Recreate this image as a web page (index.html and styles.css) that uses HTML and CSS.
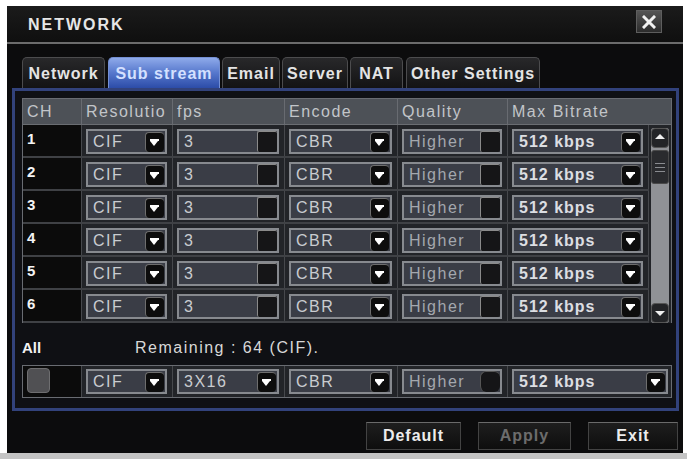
FILE: index.html
```html
<!DOCTYPE html>
<html>
<head>
<meta charset="utf-8">
<link rel="stylesheet" href="styles.css">
</head>
<body>
<div class="page">
  <div class="window">
    <div class="titlebar">
      <span class="title">NETWORK</span>
      <span class="close"><svg width="14" height="14" viewBox="0 0 14 14"><path d="M2 2L12 12M12 2L2 12" stroke="#f2f2f2" stroke-width="3" stroke-linecap="square"/></svg></span>
    </div>
    <div class="main">
      <div class="tabs">
        <div class="tab t-network">Network</div>
        <div class="tab t-sub active">Sub stream</div>
        <div class="tab t-email">Email</div>
        <div class="tab t-server">Server</div>
        <div class="tab t-nat">NAT</div>
        <div class="tab t-other">Other Settings</div>
      </div>
      <div class="panel">
        <div class="table">
          <div class="thead">
            <div class="th">CH</div>
            <div class="th">Resolutio</div>
            <div class="th">fps</div>
            <div class="th">Encode</div>
            <div class="th">Quality</div>
            <div class="th">Max Bitrate</div>
          </div>
          <div class="tbody">
            <div class="rows">
              <div class="row">
                <div class="cell ch">1</div>
                <div class="cell"><div class="box"><span>CIF</span><span class="arr"></span></div></div>
                <div class="cell"><div class="box"><span>3</span><span class="dis"></span></div></div>
                <div class="cell"><div class="box"><span>CBR</span><span class="arr"></span></div></div>
                <div class="cell"><div class="box muted"><span>Higher</span><span class="dis"></span></div></div>
                <div class="cell"><div class="box strong"><span>512 kbps</span><span class="arr"></span></div></div>
              </div>
              <div class="row">
                <div class="cell ch">2</div>
                <div class="cell"><div class="box"><span>CIF</span><span class="arr"></span></div></div>
                <div class="cell"><div class="box"><span>3</span><span class="dis"></span></div></div>
                <div class="cell"><div class="box"><span>CBR</span><span class="arr"></span></div></div>
                <div class="cell"><div class="box muted"><span>Higher</span><span class="dis"></span></div></div>
                <div class="cell"><div class="box strong"><span>512 kbps</span><span class="arr"></span></div></div>
              </div>
              <div class="row">
                <div class="cell ch">3</div>
                <div class="cell"><div class="box"><span>CIF</span><span class="arr"></span></div></div>
                <div class="cell"><div class="box"><span>3</span><span class="dis"></span></div></div>
                <div class="cell"><div class="box"><span>CBR</span><span class="arr"></span></div></div>
                <div class="cell"><div class="box muted"><span>Higher</span><span class="dis"></span></div></div>
                <div class="cell"><div class="box strong"><span>512 kbps</span><span class="arr"></span></div></div>
              </div>
              <div class="row">
                <div class="cell ch">4</div>
                <div class="cell"><div class="box"><span>CIF</span><span class="arr"></span></div></div>
                <div class="cell"><div class="box"><span>3</span><span class="dis"></span></div></div>
                <div class="cell"><div class="box"><span>CBR</span><span class="arr"></span></div></div>
                <div class="cell"><div class="box muted"><span>Higher</span><span class="dis"></span></div></div>
                <div class="cell"><div class="box strong"><span>512 kbps</span><span class="arr"></span></div></div>
              </div>
              <div class="row">
                <div class="cell ch">5</div>
                <div class="cell"><div class="box"><span>CIF</span><span class="arr"></span></div></div>
                <div class="cell"><div class="box"><span>3</span><span class="dis"></span></div></div>
                <div class="cell"><div class="box"><span>CBR</span><span class="arr"></span></div></div>
                <div class="cell"><div class="box muted"><span>Higher</span><span class="dis"></span></div></div>
                <div class="cell"><div class="box strong"><span>512 kbps</span><span class="arr"></span></div></div>
              </div>
              <div class="row">
                <div class="cell ch">6</div>
                <div class="cell"><div class="box"><span>CIF</span><span class="arr"></span></div></div>
                <div class="cell"><div class="box"><span>3</span><span class="dis"></span></div></div>
                <div class="cell"><div class="box"><span>CBR</span><span class="arr"></span></div></div>
                <div class="cell"><div class="box muted"><span>Higher</span><span class="dis"></span></div></div>
                <div class="cell"><div class="box strong"><span>512 kbps</span><span class="arr"></span></div></div>
              </div>
            </div>
            <div class="scroll">
              <div class="sb">
                <div class="sb-btn up"></div>
                <div class="sb-thumb"><i></i><i></i><i></i></div>
                <div class="sb-btn down"></div>
              </div>
            </div>
          </div>
        </div>
        <div class="allrow">
          <span class="all">All</span>
          <span class="remaining">Remaining : 64 (CIF).</span>
        </div>
        <div class="allset">
          <div class="cell ch"><div class="chk"></div></div>
          <div class="cell"><div class="box"><span>CIF</span><span class="arr"></span></div></div>
          <div class="cell"><div class="box"><span>3X16</span><span class="arr"></span></div></div>
          <div class="cell"><div class="box"><span>CBR</span><span class="arr"></span></div></div>
          <div class="cell"><div class="box muted"><span>Higher</span><span class="dis round"></span></div></div>
          <div class="cell last"><div class="box strong"><span>512 kbps</span><span class="arr"></span></div></div>
        </div>
      </div>
      <div class="buttons">
        <div class="btn b-default">Default</div>
        <div class="btn b-apply">Apply</div>
        <div class="btn b-exit">Exit</div>
      </div>
    </div>
  </div>
  <div class="strip"></div>
</div>
</body>
</html>
```

FILE: styles.css
```css
* { box-sizing: border-box; }
body {
  margin: 0;
  background: #ffffff;
  font-family: "Liberation Sans", Arial, sans-serif;
}
.page {
  width: 687px;
  height: 459px;
  padding: 6px 4px 0 7px;
  overflow: hidden;
}
.window {
  width: 676px;
  height: 447px;
  background: #0c0c0d;
  display: flex;
  flex-direction: column;
}
.strip {
  height: 6px;
  margin: 0 -4px 0 -7px;
  background: #c4c4c4;
}
.titlebar {
  height: 38px;
  flex: none;
  border-bottom: 2px solid #6c6c6c;
  background: linear-gradient(#1b1b1b, #0f0f0f);
  display: flex;
  align-items: center;
  justify-content: space-between;
  padding: 2px 21px 0;
}
.title {
  color: #e6e6e6;
  font-weight: bold;
  font-size: 16px;
  letter-spacing: 2px;
}
.close {
  align-self: flex-start;
  margin-top: 2px;
  width: 26px;
  height: 23px;
  border: 1px solid #5e5e5e;
  background: linear-gradient(#555555, #2c2c2c);
  display: flex;
  align-items: center;
  justify-content: center;
}
.main {
  flex: 1;
  padding-top: 13px;
  display: flex;
  flex-direction: column;
}
.tabs {
  display: flex;
  gap: 2px;
  padding-left: 15px;
  height: 31px;
}
.tab {
  height: 31px;
  border: 1px solid #4c4c4e;
  border-bottom: none;
  border-radius: 5px 5px 0 0;
  background: linear-gradient(#28282a, #131314);
  color: #e4e4e4;
  font-weight: bold;
  font-size: 16px;
  letter-spacing: 1px;
  display: flex;
  align-items: center;
  justify-content: center;
  padding-top: 2px;
}
.tab.active {
  background: linear-gradient(#8eaaea, #5677cc 50%, #2c4ca8);
  border-color: #7590d4;
  color: #d4e0ff;
}
.t-network { width: 83px; }
.t-sub { width: 112px; margin-left: 1px; }
.t-email { width: 58px; }
.t-server { width: 66px; }
.t-nat { width: 53px; }
.t-other { width: 134px; margin-left: 1px; }

.panel {
  margin: 0 4px 0 5px;
  height: 323px;
  border: 3px solid #32427b;
  background: #0f1014;
  padding: 7px 4px 0 7px;
}
.table {
  width: 650px;
  border: 1px solid #696c72;
  border-bottom: none;
  background: #222428;
}
.thead {
  display: grid;
  grid-template-columns: 59px 91px 112px 113px 110px 163px;
  height: 26px;
  background: #4d5157;
  border-bottom: 1px solid #6a6d72;
}
.th {
  border-right: 1px solid #686b71;
  padding-left: 4px;
  color: #c2c5c9;
  font-size: 16px;
  letter-spacing: 1.5px;
  line-height: 26px;
  white-space: nowrap;
  overflow: hidden;
}
.th:last-child { border-right: none; }
.tbody { display: flex; }
.rows { width: 626px; }
.row {
  display: grid;
  grid-template-columns: 59px 91px 112px 113px 110px 141px;
  height: 33px;
  border-bottom: 2px solid #3f4145;
}
.cell {
  border-right: 1px solid #46484c;
  padding: 4px 5px 0 4px;
}
.ch {
  background: #0b0b0b;
  color: #f4f4f4;
  font-weight: bold;
  font-size: 15px;
  line-height: 18px;
  padding: 5px 0 0 4px;
}
.box {
  height: 25px;
  border: 2px solid #878a8f;
  background: #3a3d46;
  display: flex;
  align-items: center;
  justify-content: space-between;
  padding-left: 5px;
  color: #c9ccd0;
  font-size: 16px;
  letter-spacing: 1.5px;
  white-space: nowrap;
}
.box.muted { color: #a4a8ae; }
.box.strong { color: #dcdee2; font-weight: bold; letter-spacing: 1px; }
.arr {
  position: relative;
  flex: none;
  width: 19px;
  height: 20px;
  margin-right: 1px;
  background: #0d0d0d;
  border-radius: 4px;
  border-top: 1px solid #6e6e6e;
  border-left: 1px solid #6e6e6e;
}
.arr::before {
  content: "";
  position: absolute;
  left: 4px;
  top: 6px;
  width: 9px;
  height: 2px;
  background: #ffffff;
}
.arr::after {
  content: "";
  position: absolute;
  left: 4px;
  top: 8px;
  border-left: 4.5px solid transparent;
  border-right: 4.5px solid transparent;
  border-top: 5px solid #ffffff;
}
.dis {
  flex: none;
  width: 20px;
  height: 21px;
  background: #151517;
  border-top: 1px solid #8a8a8a;
  border-left: 1px solid #8a8a8a;
  border-radius: 2px;
}
.dis.round { border-radius: 6px; border-color: #555; }

.scroll {
  width: 22px;
  padding: 3px 2px 0 2px;
}
.sb {
  width: 18px;
  height: 195px;
  background: #909296;
  border-radius: 3px;
  display: flex;
  flex-direction: column;
}
.sb-btn {
  position: relative;
  height: 20px;
  background: #232427;
  border-radius: 4px;
  border: 1px solid #555;
}
.sb-btn.down { margin-top: auto; }
.sb-btn.up::after {
  content: "";
  position: absolute;
  left: 3px;
  top: 5px;
  border-left: 5px solid transparent;
  border-right: 5px solid transparent;
  border-bottom: 5px solid #f0f0f0;
}
.sb-btn.down::after {
  content: "";
  position: absolute;
  left: 3px;
  top: 7px;
  border-left: 5px solid transparent;
  border-right: 5px solid transparent;
  border-top: 5px solid #f0f0f0;
}
.sb-thumb {
  margin-top: 2px;
  height: 34px;
  background: #2a2b2e;
  border-radius: 3px;
  border: 1px solid #4a4a4a;
  display: flex;
  flex-direction: column;
  align-items: center;
  justify-content: center;
  gap: 3px;
}
.sb-thumb i {
  display: block;
  width: 10px;
  height: 1px;
  background: #8a8c90;
}

.allrow {
  height: 42px;
  display: flex;
  align-items: flex-end;
  padding-bottom: 7px;
  line-height: 20px;
}
.all {
  width: 113px;
  color: #f2f2f2;
  font-weight: bold;
  font-size: 15px;
}
.remaining {
  color: #d8d8d8;
  font-size: 16px;
  letter-spacing: 1.5px;
}
.allset {
  display: grid;
  grid-template-columns: 59px 91px 112px 113px 110px 163px;
  width: 650px;
  height: 33px;
  border: 1px solid #696c72;
  background: #222428;
}
.allset .cell { padding-top: 3px; }
.allset .cell:last-child { border-right: none; padding-right: 3px; }
.allset .ch { padding: 2px 0 0 4px; }
.chk {
  width: 23px;
  height: 25px;
  background: #505053;
  border: 1px solid #6e6e70;
  border-radius: 4px;
}

.buttons {
  display: flex;
  justify-content: flex-end;
  gap: 17px;
  margin-top: 11px;
  padding-right: 5px;
}
.btn {
  height: 28px;
  border: 1px solid #434343;
  border-top-color: #6a6a6a;
  background: linear-gradient(#1e1e1e, #0e0e0e);
  color: #ececec;
  font-weight: bold;
  font-size: 16px;
  letter-spacing: 1px;
  display: flex;
  align-items: center;
  justify-content: center;
}
.b-default { width: 95px; }
.b-apply { width: 93px; color: #6c6c6c; }
.b-exit { width: 90px; }
```
